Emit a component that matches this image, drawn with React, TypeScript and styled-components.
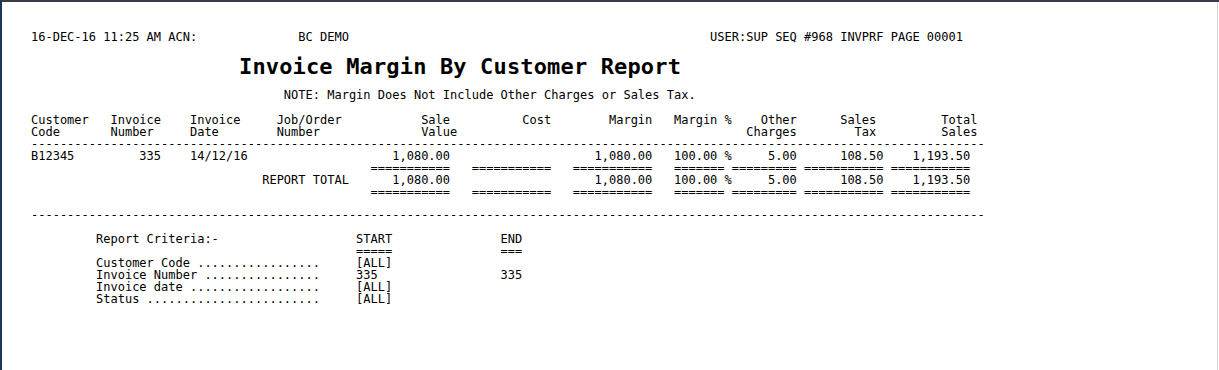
import React from 'react';
import styled, { createGlobalStyle } from 'styled-components';

const GlobalStyle = createGlobalStyle`
  html, body { margin: 0; padding: 0; background: #ffffff; }
  body { width: 1219px; height: 370px; overflow: hidden; }
`;

const Window = styled.div`
  box-sizing: border-box;
  width: 1219px;
  height: 370px;
  display: flex;
  border-top: 2px solid #363d44;
  border-left: 2px solid #1b3759;
  background: #ffffff;
`;

const Paper = styled.main`
  box-sizing: border-box;
  flex: 0 0 1216px;
  border-right: 1px solid #d6d6d6;
  padding: 29px 0 0 29px;
  font-family: "DejaVu Sans Mono", "Liberation Mono", monospace;
  font-size: 12px;
  line-height: 12px;
  color: #000000;
`;

const Section = styled.section<{ $gap?: number }>`
  display: flex;
  flex-direction: column;
  margin-top: ${(p) => p.$gap ?? 0}px;
`;

const Line = styled.div`
  white-space: pre;
  height: 12px;
`;

const Title = styled.h1`
  margin: 11px 0 0 0;
  padding-left: 208px;
  font-family: "DejaVu Sans Mono", "Liberation Mono", monospace;
  font-size: 22px;
  line-height: 26px;
  font-weight: bold;
  letter-spacing: 0.15px;
  white-space: pre;
`;

const Note = styled.div`
  margin-top: 9px;
  white-space: pre;
  height: 12px;
`;

type Seg = [number, string];
const place = (...segs: Seg[]) => {
  let s = '';
  for (const [c, t] of segs) s = s.padEnd(c, ' ') + t;
  return s;
};
const rep = (ch: string, n: number) => ch.repeat(n);
const dots = (label: string) => label.padEnd(31, '.');

const equalsRow = place(
  [47, rep('=', 11)],
  [61, rep('=', 11)],
  [75, rep('=', 11)],
  [89, rep('=', 7)],
  [97, rep('=', 9)],
  [107, rep('=', 11)],
  [119, rep('=', 11)]
);

const amounts: Seg[] = [
  [50, '1,080.00'],
  [78, '1,080.00'],
  [89, '100.00 %'],
  [102, '5.00'],
  [112, '108.50'],
  [122, '1,193.50'],
];

const tableLines = [
  place([0, 'Customer'], [11, 'Invoice'], [22, 'Invoice'], [34, 'Job/Order'], [54, 'Sale'], [68, 'Cost'], [80, 'Margin'], [89, 'Margin %'], [101, 'Other'], [112, 'Sales'], [126, 'Total']),
  place([0, 'Code'], [11, 'Number'], [22, 'Date'], [34, 'Number'], [54, 'Value'], [99, 'Charges'], [114, 'Tax'], [126, 'Sales']),
  rep('-', 132),
  place([0, 'B12345'], [15, '335'], [22, '14/12/16'], ...amounts),
  equalsRow,
  place([32, 'REPORT TOTAL'], ...amounts),
  equalsRow,
];

const criteriaLines = [
  place([9, 'Report Criteria:-'], [45, 'START'], [65, 'END']),
  place([45, '====='], [65, '===']),
  place([9, dots('Customer Code ')], [45, '[ALL]']),
  place([9, dots('Invoice Number ')], [45, '335'], [65, '335']),
  place([9, dots('Invoice date ')], [45, '[ALL]']),
  place([9, dots('Status ')], [45, '[ALL]']),
];

export default function App() {
  return (
    <>
      <GlobalStyle />
      <Window>
        <Paper>
          <Line>
            {place([0, '16-DEC-16 11:25 AM ACN:'], [37, 'BC DEMO'], [94, 'USER:SUP SEQ #968 INVPRF PAGE 00001'])}
          </Line>
          <Title>Invoice Margin By Customer Report</Title>
          <Note>{place([35, 'NOTE: Margin Does Not Include Other Charges or Sales Tax.'])}</Note>
          <Section $gap={13}>
            {tableLines.map((l, i) => (
              <Line key={i}>{l}</Line>
            ))}
          </Section>
          <Section $gap={11}>
            <Line>{rep('-', 132)}</Line>
          </Section>
          <Section $gap={12}>
            {criteriaLines.map((l, i) => (
              <Line key={i}>{l}</Line>
            ))}
          </Section>
        </Paper>
      </Window>
    </>
  );
}
